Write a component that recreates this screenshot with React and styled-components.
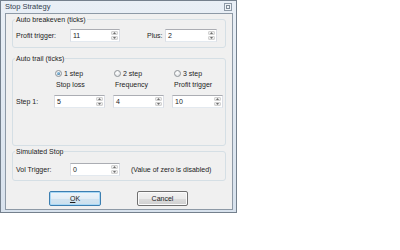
import React from "react";
import styled, { createGlobalStyle } from "styled-components";

const Global = createGlobalStyle`
  html, body { margin: 0; padding: 0; background: #ffffff; }
  body {
    font-family: "Liberation Sans", Arial, sans-serif;
    font-size: 7px;
    color: #1c1c1c;
  }
`;

const Window = styled.div`
  width: 237px;
  height: 213px;
  box-sizing: border-box;
  border: 1px solid #74808d;
  background: linear-gradient(#e9eff6, #d8e2ed);
  display: flex;
  flex-direction: column;
  padding: 0 3px 2px 4px;
`;

const TitleBar = styled.div`
  height: 12px;
  display: flex;
  align-items: center;
  justify-content: space-between;
  padding-left: 1px;
  margin-left: -1px;
`;

const Title = styled.span`
  font-size: 7.5px;
  color: #34414f;
  line-height: 12px;
`;

const CloseBox = styled.div`
  width: 6px;
  height: 6px;
  margin-right: 1px;
  border: 1px solid #8e9aa7;
  background: #eef2f6;
  display: flex;
  align-items: center;
  justify-content: center;
`;

const Content = styled.div`
  flex: 1;
  border: 1px solid #8d99a6;
  background: #f0f0f0;
  padding: 0 6px;
  display: flex;
  flex-direction: column;
`;

const Group = styled.div`
  position: relative;
  box-sizing: border-box;
  height: ${(p) => p.$h}px;
  margin-top: ${(p) => p.$mt}px;
  border: 1px solid #d5dfe5;
  border-radius: 3px;
  padding-top: ${(p) => p.$pt}px;
  padding-left: 3px;
`;

const Caption = styled.span`
  position: absolute;
  top: -5px;
  left: 2px;
  padding: 0 1px;
  line-height: 9px;
  background: #f0f0f0;
`;

const FieldRow = styled.div`
  display: grid;
  grid-template-columns: ${(p) => p.$cols};
  align-items: center;
  height: 13px;
`;

const Label = styled.span`
  line-height: 13px;
  white-space: nowrap;
`;

const StepGrid = styled.div`
  display: grid;
  grid-template-columns: 30px 51px 51px 51px;
  column-gap: 8px;
  height: ${(p) => p.$h}px;
  margin-top: ${(p) => p.$mt}px;
  align-items: center;
`;

const Cell = styled.span`
  padding-left: ${(p) => p.$pl || 0}px;
  white-space: nowrap;
  line-height: ${(p) => p.$h}px;
`;

const InputBox = styled.div`
  box-sizing: border-box;
  width: ${(p) => p.$w || 51}px;
  height: 13px;
  background: #ffffff;
  border: 1px solid #abadb3;
  border-left-color: #dadde4;
  border-right-color: #dadde4;
  border-bottom-color: #e3e9ef;
  display: flex;
  align-items: stretch;
`;

const InputText = styled.span`
  flex: 1;
  padding-left: 2px;
  line-height: 11px;
`;

const Spin = styled.div`
  width: 7px;
  display: flex;
  flex-direction: column;
  margin: 1px 1px 1px 0;
  gap: 1px;
`;

const SpinHalf = styled.div`
  flex: 1;
  background: linear-gradient(#f4f4f4, #e4e4e4);
  border: 1px solid #d2d2d2;
  border-radius: 1px;
  display: flex;
  align-items: center;
  justify-content: center;
`;

const RadioWrap = styled.span`
  display: inline-flex;
  align-items: center;
  gap: 2px;
  padding-left: ${(p) => p.$pl || 1}px;
  line-height: 9px;
`;

const RadioCircle = styled.span`
  box-sizing: border-box;
  width: 7px;
  height: 7px;
  border-radius: 50%;
  border: 1px solid #8f9499;
  background: radial-gradient(circle at 40% 35%, #ffffff, #d9dcdf);
  display: flex;
  align-items: center;
  justify-content: center;
`;

const RadioDot = styled.span`
  width: 3px;
  height: 3px;
  border-radius: 50%;
  background: radial-gradient(circle at 35% 35%, #9fd0ee, #1f5d8a);
`;

const Note = styled.span`
  padding-left: 11px;
  line-height: 13px;
  white-space: nowrap;
`;

const ButtonRow = styled.div`
  display: flex;
  margin-top: 10px;
  padding-left: 37px;
  gap: 36px;
`;

const Button = styled.div`
  box-sizing: border-box;
  width: ${(p) => p.$w}px;
  height: 15px;
  border-radius: 2px;
  border: 1px solid ${(p) => (p.$focus ? "#3c7fb1" : "#707070")};
  background: ${(p) =>
    p.$focus
      ? "linear-gradient(#eef5fa 0%, #e3eef6 50%, #d2e4f0 51%, #cbe0ee 100%)"
      : "linear-gradient(#f2f2f2 0%, #ebebeb 50%, #dddddd 51%, #cfcfcf 100%)"};
  box-shadow: ${(p) => (p.$focus ? "inset 0 0 0 1px #a9d8f5" : "inset 0 0 0 1px #fbfbfb")};
  display: flex;
  align-items: center;
  justify-content: center;
  line-height: 13px;
`;

function Spinner() {
  return (
    <Spin>
      <SpinHalf>
        <svg width="3" height="2" viewBox="0 0 3 2">
          <path d="M0 2 L1.5 0 L3 2 Z" fill="#6d6d6d" />
        </svg>
      </SpinHalf>
      <SpinHalf>
        <svg width="3" height="2" viewBox="0 0 3 2">
          <path d="M0 0 L1.5 2 L3 0 Z" fill="#6d6d6d" />
        </svg>
      </SpinHalf>
    </Spin>
  );
}

function NumInput({ value, w }) {
  return (
    <InputBox $w={w}>
      <InputText>{value}</InputText>
      <Spinner />
    </InputBox>
  );
}

function Radio({ checked, label, pl }) {
  return (
    <RadioWrap $pl={pl}>
      <RadioCircle>{checked && <RadioDot />}</RadioCircle>
      {label}
    </RadioWrap>
  );
}

export default function App() {
  return (
    <>
      <Global />
      <Window>
        <TitleBar>
          <Title>Stop Strategy</Title>
          <CloseBox>
            <svg width="4" height="4" viewBox="0 0 4 4">
              <rect x="0.5" y="0.5" width="3" height="3" fill="none" stroke="#7f8b98" strokeWidth="1" />
            </svg>
          </CloseBox>
        </TitleBar>
        <Content>
          <Group $h={29} $mt={5} $pt={9}>
            <Caption>Auto breakeven (ticks)</Caption>
            <FieldRow $cols="54px 50px 27px 18px 52px">
              <Label>Profit trigger:</Label>
              <NumInput value="11" w={50} />
              <span />
              <Label>Plus:</Label>
              <NumInput value="2" w={52} />
            </FieldRow>
          </Group>

          <Group $h={88} $mt={10} $pt={10}>
            <Caption>Auto trail (ticks)</Caption>
            <StepGrid $h={9} $mt={0}>
              <span />
              <Radio checked label="1 step" pl={1} />
              <Radio label="2 step" pl={1} />
              <Radio label="3 step" pl={2} />
            </StepGrid>
            <StepGrid $h={9} $mt={2}>
              <span />
              <Cell $pl={2} $h={9}>Stop loss</Cell>
              <Cell $pl={2} $h={9}>Frequency</Cell>
              <Cell $pl={2} $h={9}>Profit trigger</Cell>
            </StepGrid>
            <StepGrid $h={13} $mt={6}>
              <Cell $h={13}>Step 1:</Cell>
              <NumInput value="5" />
              <NumInput value="4" />
              <NumInput value="10" />
            </StepGrid>
          </Group>

          <Group $h={30} $mt={5} $pt={11}>
            <Caption>Simulated Stop</Caption>
            <FieldRow $cols="54px 50px auto">
              <Label>Vol Trigger:</Label>
              <NumInput value="0" w={50} />
              <Note>(Value of zero is disabled)</Note>
            </FieldRow>
          </Group>

          <ButtonRow>
            <Button $w={52} $focus>
              <span>
                <u>O</u>K
              </span>
            </Button>
            <Button $w={51}>Cancel</Button>
          </ButtonRow>
        </Content>
      </Window>
    </>
  );
}
